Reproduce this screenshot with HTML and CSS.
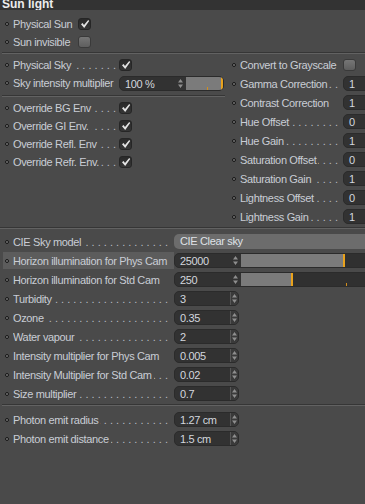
FILE: index.html
```html
<!DOCTYPE html>
<html lang="en">
<head>
    <meta charset="UTF-8">
    <title>Sun light</title>
    <link rel="stylesheet" href="styles.css">
</head>
<body>

    <div class="title"><span>Sun light</span></div>

    <section class="block top">
        <div class="row r18"><i class="dot"></i><span class="lbl w-top">Physical Sun</span><span class="check on"><svg width="10" height="10" viewBox="0 0 10 10"><path d="M1 5.2 L2.6 4 L4 6 L8.2 1 L9.2 2 L4.2 9 Z" fill="#e4e4e4"/></svg></span></div>
        <div class="row r18"><i class="dot"></i><span class="lbl w-top">Sun invisible</span><span class="check"></span></div>
    </section>

    <hr class="sep s1">

    <section class="cols">
        <div class="col left">
            <div class="row r18"><i class="dot"></i><span class="lbl w-left">Physical Sky<span class="lead">. . . . . . . . . . . . . . . . . . . .</span></span><span class="check on"><svg width="10" height="10" viewBox="0 0 10 10"><path d="M1 5.2 L2.6 4 L4 6 L8.2 1 L9.2 2 L4.2 9 Z" fill="#e4e4e4"/></svg></span></div>
            <div class="row r18"><i class="dot"></i><span class="lbl w-left">Sky intensity multiplier</span>
                <span class="field sky">
                    <span class="num">100 %<svg class="arr" width="7" height="11" viewBox="0 0 7 11"><path d="M3.5 1 L6 4.5 L1 4.5 Z M3.5 10 L6 6.5 L1 6.5 Z" fill="#8e8e8e"/></svg></span>
                    <span class="bar"><span class="fill" style="width: 37px"></span><i class="tick" style="left: 21px"></i></span>
                </span>
            </div>
            <hr class="sep s2">
            <div class="row r18"><i class="dot"></i><span class="lbl w-left">Override BG Env<span class="lead">. . . . . . . . . . . . . . . . . . . .</span></span><span class="check on"><svg width="10" height="10" viewBox="0 0 10 10"><path d="M1 5.2 L2.6 4 L4 6 L8.2 1 L9.2 2 L4.2 9 Z" fill="#e4e4e4"/></svg></span></div>
            <div class="row r18"><i class="dot"></i><span class="lbl w-left">Override GI Env.<span class="lead">. . . . . . . . . . . . . . . . . . . .</span></span><span class="check on"><svg width="10" height="10" viewBox="0 0 10 10"><path d="M1 5.2 L2.6 4 L4 6 L8.2 1 L9.2 2 L4.2 9 Z" fill="#e4e4e4"/></svg></span></div>
            <div class="row r18"><i class="dot"></i><span class="lbl w-left">Override Refl. Env<span class="lead">. . . . . . . . . . . . . . . . . . . .</span></span><span class="check on"><svg width="10" height="10" viewBox="0 0 10 10"><path d="M1 5.2 L2.6 4 L4 6 L8.2 1 L9.2 2 L4.2 9 Z" fill="#e4e4e4"/></svg></span></div>
            <div class="row r18"><i class="dot"></i><span class="lbl w-left">Override Refr. Env.<span class="lead">. . . . . . . . . . . . . . . . . . . .</span></span><span class="check on"><svg width="10" height="10" viewBox="0 0 10 10"><path d="M1 5.2 L2.6 4 L4 6 L8.2 1 L9.2 2 L4.2 9 Z" fill="#e4e4e4"/></svg></span></div>
        </div>

        <div class="col right">
            <div class="row r18"><i class="dot"></i><span class="lbl w-right">Convert to Grayscale</span><span class="check"></span></div>
            <div class="row"><i class="dot"></i><span class="lbl w-right">Gamma Correction<span class="lead">. . . . . . . . . . . . . . . . . . . .</span></span><span class="field small">1</span></div>
            <div class="row"><i class="dot"></i><span class="lbl w-right">Contrast Correction</span><span class="field small">1</span></div>
            <div class="row"><i class="dot"></i><span class="lbl w-right">Hue Offset<span class="lead">. . . . . . . . . . . . . . . . . . . .</span></span><span class="field small">0</span></div>
            <div class="row"><i class="dot"></i><span class="lbl w-right">Hue Gain<span class="lead">. . . . . . . . . . . . . . . . . . . .</span></span><span class="field small">1</span></div>
            <div class="row"><i class="dot"></i><span class="lbl w-right">Saturation Offset<span class="lead">. . . . . . . . . . . . . . . . . . . .</span></span><span class="field small">0</span></div>
            <div class="row"><i class="dot"></i><span class="lbl w-right">Saturation Gain<span class="lead">. . . . . . . . . . . . . . . . . . . .</span></span><span class="field small">1</span></div>
            <div class="row"><i class="dot"></i><span class="lbl w-right">Lightness Offset<span class="lead">. . . . . . . . . . . . . . . . . . . .</span></span><span class="field small">0</span></div>
            <div class="row"><i class="dot"></i><span class="lbl w-right">Lightness Gain<span class="lead">. . . . . . . . . . . . . . . . . . . .</span></span><span class="field small">1</span></div>
        </div>
    </section>

    <hr class="sep s3">

    <section class="block sky">
        <div class="row"><i class="dot"></i><span class="lbl w-wide">CIE Sky model<span class="lead">. . . . . . . . . . . . . . . . . . . . . . . . . . . . . .</span></span><span class="drop">CIE Clear sky</span></div>
        <div class="row"><span class="hl"><i class="dot"></i><span class="lbl w-wide">Horizon illumination for Phys Cam</span></span>
            <span class="field wide">
                <span class="num">25000<svg class="arr" width="7" height="11" viewBox="0 0 7 11"><path d="M3.5 1 L6 4.5 L1 4.5 Z M3.5 10 L6 6.5 L1 6.5 Z" fill="#8e8e8e"/></svg></span>
                <span class="bar"><span class="fill" style="width: 104px"></span></span>
            </span>
        </div>
        <div class="row"><i class="dot"></i><span class="lbl w-wide">Horizon illumination for Std Cam</span>
            <span class="field wide">
                <span class="num">250<svg class="arr" width="7" height="11" viewBox="0 0 7 11"><path d="M3.5 1 L6 4.5 L1 4.5 Z M3.5 10 L6 6.5 L1 6.5 Z" fill="#8e8e8e"/></svg></span>
                <span class="bar"><span class="fill" style="width: 52px"></span><i class="tick" style="left: 105px"></i></span>
            </span>
        </div>
        <div class="row"><i class="dot"></i><span class="lbl w-wide">Turbidity<span class="lead">. . . . . . . . . . . . . . . . . . . . . . . . . . . . . .</span></span><span class="field num solo">3<span class="box"><svg width="7" height="11" viewBox="0 0 7 11"><path d="M3.5 1 L6 4.5 L1 4.5 Z M3.5 10 L6 6.5 L1 6.5 Z" fill="#8e8e8e"/></svg></span></span></div>
        <div class="row"><i class="dot"></i><span class="lbl w-wide">Ozone<span class="lead">. . . . . . . . . . . . . . . . . . . . . . . . . . . . . .</span></span><span class="field num solo">0.35<span class="box"><svg width="7" height="11" viewBox="0 0 7 11"><path d="M3.5 1 L6 4.5 L1 4.5 Z M3.5 10 L6 6.5 L1 6.5 Z" fill="#8e8e8e"/></svg></span></span></div>
        <div class="row"><i class="dot"></i><span class="lbl w-wide">Water vapour<span class="lead">. . . . . . . . . . . . . . . . . . . . . . . . . . . . . .</span></span><span class="field num solo">2<span class="box"><svg width="7" height="11" viewBox="0 0 7 11"><path d="M3.5 1 L6 4.5 L1 4.5 Z M3.5 10 L6 6.5 L1 6.5 Z" fill="#8e8e8e"/></svg></span></span></div>
        <div class="row"><i class="dot"></i><span class="lbl w-wide">Intensity multiplier for Phys Cam</span><span class="field num solo">0.005<span class="box"><svg width="7" height="11" viewBox="0 0 7 11"><path d="M3.5 1 L6 4.5 L1 4.5 Z M3.5 10 L6 6.5 L1 6.5 Z" fill="#8e8e8e"/></svg></span></span></div>
        <div class="row"><i class="dot"></i><span class="lbl w-wide">Intensity Multiplier for Std Cam<span class="lead">. . . . . . . . . .</span></span><span class="field num solo">0.02<span class="box"><svg width="7" height="11" viewBox="0 0 7 11"><path d="M3.5 1 L6 4.5 L1 4.5 Z M3.5 10 L6 6.5 L1 6.5 Z" fill="#8e8e8e"/></svg></span></span></div>
        <div class="row"><i class="dot"></i><span class="lbl w-wide">Size multiplier<span class="lead">. . . . . . . . . . . . . . . . . . . . . . . . . . . . . .</span></span><span class="field num solo">0.7<span class="box"><svg width="7" height="11" viewBox="0 0 7 11"><path d="M3.5 1 L6 4.5 L1 4.5 Z M3.5 10 L6 6.5 L1 6.5 Z" fill="#8e8e8e"/></svg></span></span></div>
    </section>

    <hr class="sep s4">

    <section class="block photon">
        <div class="row"><i class="dot"></i><span class="lbl w-wide">Photon emit radius<span class="lead">. . . . . . . . . . . . . . . . . . . . . . . . . . . . . .</span></span><span class="field num solo">1.27 cm<span class="box"><svg width="7" height="11" viewBox="0 0 7 11"><path d="M3.5 1 L6 4.5 L1 4.5 Z M3.5 10 L6 6.5 L1 6.5 Z" fill="#8e8e8e"/></svg></span></span></div>
        <div class="row"><i class="dot"></i><span class="lbl w-wide">Photon emit distance<span class="lead">. . . . . . . . . . . . . . . . . . . . . . . . . . . . . .</span></span><span class="field num solo">1.5 cm<span class="box"><svg width="7" height="11" viewBox="0 0 7 11"><path d="M3.5 1 L6 4.5 L1 4.5 Z M3.5 10 L6 6.5 L1 6.5 Z" fill="#8e8e8e"/></svg></span></span></div>
    </section>

</body>
</html>
```

FILE: styles.css
```css
body {
    margin: 0;
    width: 365px;
    height: 504px;
    overflow: hidden;
    background: #4a4a4a;
    color: #c9cdd5;
    font-family: 'Liberation Sans', Arial, sans-serif;
    font-size: 11px;
    letter-spacing: -0.35px;
}

.title {
    height: 10px;
    background: #333333;
    overflow: hidden;
    padding-left: 2px;
}

.title span {
    display: block;
    margin-top: -2px;
    line-height: 12px;
    font-size: 12px;
    font-weight: bold;
    letter-spacing: 0;
    color: #ececec;
}

.block.top {
    padding-top: 5px;
}

.sep {
    height: 0;
    border: 0;
    border-top: 1px solid #363636;
    border-bottom: 1px solid #626262;
    margin: 1px 0 3px 2px;
}

.sep.s1 { margin: 1px 0 0 2px; }
.sep.s2 { margin: 3px 2px 2px 2px; }
.sep.s3 { margin: 1px 0 3px 0; }
.sep.s4 { margin: 1px 0 4px 2px; }

.cols {
    display: grid;
    grid-template-columns: 227px 1fr;
    padding-top: 2px;
}

.row {
    display: flex;
    align-items: center;
    height: 19px;
    white-space: nowrap;
}

.row.r18 {
    height: 18px;
}

.dot {
    flex: none;
    width: 2px;
    height: 2px;
    border: 1px solid #151515;
    border-radius: 50%;
    background: #7c7c7c;
    margin: 0 4px 0 5px;
}

.lbl {
    display: flex;
    flex: none;
    overflow: hidden;
}

.lead {
    flex: 1;
    min-width: 0;
    overflow: hidden;
    direction: rtl;
    margin-left: 2px;
    letter-spacing: 0;
    color: #b8bcc4;
}

.w-top { width: 65px; }
.w-left { width: 103px; margin-right: 3px; }
.w-right { width: 98px; margin-right: 5px; }
.w-wide { width: 155px; margin-right: 6px; }

.check {
    flex: none;
    box-sizing: border-box;
    width: 13px;
    height: 12px;
    border-radius: 3px;
    border: 1px solid #3a3a3a;
    background: linear-gradient(#767676, #5e5e5e);
    display: flex;
    align-items: center;
    justify-content: center;
}

.check.on {
    border-color: #262626;
    background: linear-gradient(#2a2a2a, #363636);
}

.field {
    flex: none;
    display: flex;
    box-sizing: border-box;
    height: 15px;
    line-height: 15px;
    border-radius: 5px;
    background: #323232;
    border: 1px solid #2b2b2b;
    color: #d3d7de;
    overflow: hidden;
}

.field.small {
    width: 40px;
    padding-left: 5px;
}

.num {
    position: relative;
    box-sizing: border-box;
    width: 66px;
    padding-left: 5px;
    flex: none;
}

.num .arr {
    position: absolute;
    right: 2px;
    top: 1px;
}

.field.solo {
    width: 65px;
}

.field.solo .box {
    position: absolute;
    right: 0;
    top: 0;
    width: 7px;
    height: 13px;
    border-left: 1px solid #565656;
    background: #3a3a3a;
    display: flex;
    align-items: center;
    justify-content: center;
}

.field.sky {
    width: 105px;
}

.field.wide {
    width: 200px;
    border-radius: 5px 0 0 5px;
}

.bar {
    position: relative;
    flex: 1;
    display: flex;
    background: #303030;
}

.fill {
    flex: none;
    box-sizing: border-box;
    height: 100%;
    background: #7b7b7b;
    border-right: 2px solid #e9a21c;
}

.tick {
    position: absolute;
    bottom: 0;
    width: 1px;
    height: 3px;
    background: #d28e1c;
}

.drop {
    flex: none;
    width: 200px;
    height: 15px;
    line-height: 15px;
    padding-left: 6px;
    border-radius: 5px 0 0 5px;
    background: #6c6c6c;
    color: #dfe2e7;
}

.hl {
    display: flex;
    align-items: center;
    height: 17px;
    margin-left: 3px;
    padding-right: 2px;
    background: #5c5c5c;
}

.hl .dot {
    margin-left: 2px;
}

.hl .lbl {
    margin-right: 4px;
}
```
